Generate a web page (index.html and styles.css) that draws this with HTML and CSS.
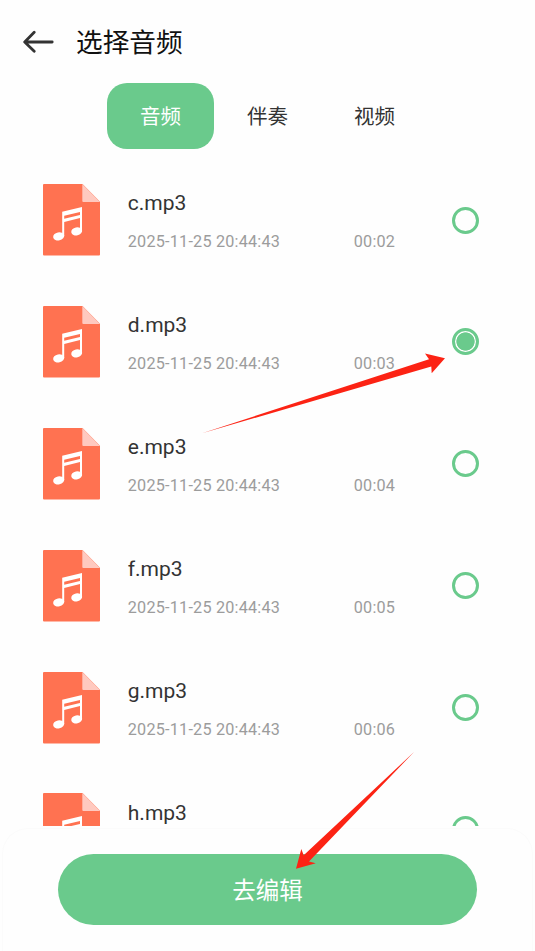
FILE: index.html
```html
<!DOCTYPE html>
<html lang="zh-CN">
<head>
<meta charset="utf-8">
<title>选择音频</title>
<link rel="stylesheet" href="styles.css">
</head>
<body>
<svg class="defs" aria-hidden="true">
  <symbol id="file" viewBox="0 0 57 72">
    <path fill="#ff7251" d="M1 0H39.5L57 17.8V70.5Q57 71.6 56 71.6H1Q0 71.6 0 70.5V1Q0 0 1 0Z"/>
    <path fill="#ffc9bf" d="M39.3 0L57 17.9H40.3Q39.3 17.9 39.3 17Z"/>
    <path fill="#fff" fill-rule="evenodd" d="M19.2 27.8L39 23V47.5H37V37.8V34L21.2 38V52H19.2ZM21.2 31.8V34.7L37 30.9V28Z"/>
    <ellipse cx="15.7" cy="52.3" rx="5.6" ry="4" transform="rotate(-12 15.7 52.3)" fill="#fff"/>
    <ellipse cx="33.7" cy="47.3" rx="5.5" ry="4" transform="rotate(-12 33.7 47.3)" fill="#fff"/>
  </symbol>
</svg>
<div class="screen">
  <header class="header">
    <svg class="back" viewBox="0 0 32 24"><path d="M29.2 12H2M11.2 2.3L1.7 12L11.2 21.2"/></svg>
    <h1 class="title">选择音频</h1>
  </header>
  <nav class="tabs">
    <span class="tab active">音频</span>
    <span class="tab">伴奏</span>
    <span class="tab">视频</span>
  </nav>
  <main class="list">
    <div class="row"><svg class="file"><use href="#file"/></svg><div class="info"><div class="name">c.mp3</div><div class="meta"><span class="date">2025-11-25 20:44:43</span><span class="time">00:02</span></div></div><span class="radio"></span></div>
    <div class="row"><svg class="file"><use href="#file"/></svg><div class="info"><div class="name">d.mp3</div><div class="meta"><span class="date">2025-11-25 20:44:43</span><span class="time">00:03</span></div></div><span class="radio checked"></span></div>
    <div class="row"><svg class="file"><use href="#file"/></svg><div class="info"><div class="name">e.mp3</div><div class="meta"><span class="date">2025-11-25 20:44:43</span><span class="time">00:04</span></div></div><span class="radio"></span></div>
    <div class="row"><svg class="file"><use href="#file"/></svg><div class="info"><div class="name">f.mp3</div><div class="meta"><span class="date">2025-11-25 20:44:43</span><span class="time">00:05</span></div></div><span class="radio"></span></div>
    <div class="row"><svg class="file"><use href="#file"/></svg><div class="info"><div class="name">g.mp3</div><div class="meta"><span class="date">2025-11-25 20:44:43</span><span class="time">00:06</span></div></div><span class="radio"></span></div>
    <div class="row"><svg class="file"><use href="#file"/></svg><div class="info"><div class="name">h.mp3</div></div><span class="radio"></span></div>
  </main>
  <footer class="footer"><button class="edit">去编辑</button></footer>
  <svg class="arrows" viewBox="0 0 535 951">
    <path d="M202 433.3L429 359.3L425 353.5L445 358.3L431.7 373.2L431.3 366.5Z"/>
    <path d="M414 752L303.7 855.3L301.3 849L296 868.8L315.8 863.3L309 861.5Z"/>
  </svg>
</div>
</body>
</html>
```
FILE: styles.css
```css
* { box-sizing: border-box; }

body {
  margin: 0;
  background: #fefefe;
  font-family: Roboto, "Noto Sans CJK SC", sans-serif;
  color: #333;
}

.defs { display: none; }

.screen {
  position: relative;
  width: 535px;
  height: 951px;
  overflow: hidden;
  display: flex;
  flex-direction: column;
}

.header {
  height: 83px;
  flex: none;
  display: flex;
  align-items: center;
  gap: 21px;
  padding-left: 23px;
}

.back {
  width: 32px;
  height: 24px;
  fill: none;
  stroke: #333;
  stroke-width: 2.8;
  stroke-linecap: round;
  stroke-linejoin: round;
}

.title {
  margin: 0;
  padding-top: 3px;
  font-size: 26.7px;
  line-height: 40px;
  font-weight: 400;
  color: #111;
}

.tabs {
  display: flex;
  flex: none;
  height: 66px;
  padding-left: 107px;
}

.tab {
  width: 107px;
  line-height: 68px;
  height: 66px;
  text-align: center;
  font-size: 20.5px;
  border-radius: 20px;
}

.tab.active {
  background: #6aca8c;
  color: #fff;
}

.list {
  flex: none;
  height: 677px;
  overflow: hidden;
  padding-top: 35px;
}

.row {
  height: 121.9px;
  display: flex;
  align-items: flex-start;
  padding-left: 42.6px;
}

.file {
  width: 57px;
  height: 72px;
  flex: none;
}

.info {
  width: 324px;
  padding: 5.4px 0 0 28.2px;
}

.name {
  font-size: 21px;
  line-height: 28px;
}

.meta {
  display: flex;
  margin-top: 15px;
  font-size: 16.2px;
  line-height: 20px;
  letter-spacing: 0.22px;
  color: #9c9c9c;
}

.date { width: 226px; }

.radio {
  width: 27px;
  height: 27px;
  margin: 22.6px 0 0 28px;
  border: 3px solid #6aca8c;
  border-radius: 50%;
}

.radio.checked {
  border-width: 3px;
  background: radial-gradient(circle, #6aca8c 8.8px, #fff 9.5px);
}

.footer {
  flex: none;
  height: 123px;
  margin: 2px 2px 0;
  padding: 25px 55px;
  border: 1px solid #fbfbfb;
  border-bottom: 0;
  border-radius: 26px 26px 0 0;
}

.edit {
  display: block;
  width: 419px;
  height: 71px;
  padding: 3px 0 0;
  border: 0;
  border-radius: 36px;
  background: #6aca8c;
  color: #fff;
  font: 400 23.5px/68px Roboto, "Noto Sans CJK SC", sans-serif;
}

.arrows {
  position: absolute;
  inset: 0;
  width: 535px;
  height: 951px;
  fill: #fc2314;
  pointer-events: none;
}
```
